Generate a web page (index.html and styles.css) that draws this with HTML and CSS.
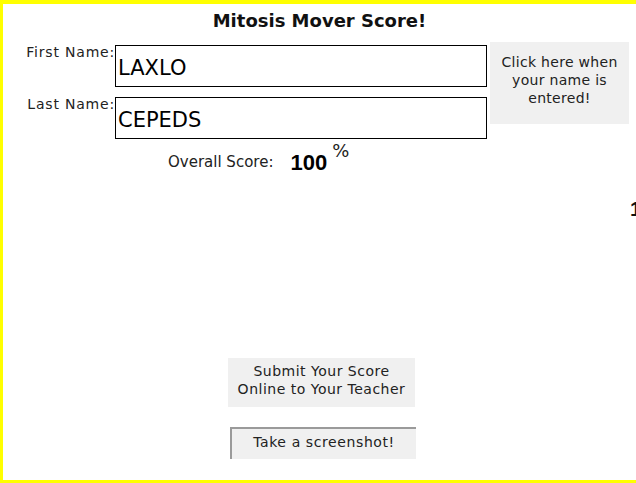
FILE: index.html
```html
<!DOCTYPE html>
<html>
<head>
<meta charset="utf-8">
<link rel="stylesheet" href="styles.css">
</head>
<body>
<div class="stage">
  <h1 class="title">Mitosis Mover Score!</h1>
  <div class="form">
    <div class="fields">
      <div class="field">
        <label class="label">First Name:</label>
        <div class="input">LAXLO</div>
      </div>
      <div class="field">
        <label class="label">Last Name:</label>
        <div class="input">CEPEDS</div>
      </div>
    </div>
    <div class="btn click">Click here when<br>your name is<br>entered!</div>
  </div>
  <div class="score">
    <span class="score-label">Overall Score:</span>
    <span class="score-value">100</span>
    <span class="pct">%</span>
  </div>
  <div class="actions">
    <div class="btn submit">Submit Your Score<br>Online to Your Teacher</div>
    <div class="btn shot">Take a screenshot!</div>
  </div>
  <div class="stray">1</div>
</div>
</body>
</html>
```
FILE: styles.css
```css
* { box-sizing: border-box; }
html, body { margin: 0; padding: 0; background: #fff; overflow: hidden; }
body { width: 636px; height: 483px; }
.stage {
  position: relative;
  width: 640px;
  height: 483px;
  border-top: 4px solid #ffff00;
  border-left: 3px solid #ffff00;
  border-bottom: 3px solid #ffff00;
  font-family: "DejaVu Sans", sans-serif;
  color: #1a1a1a;
  display: flex;
  flex-direction: column;
}
.title {
  margin: 5px 0 0 0;
  font-size: 18px;
  line-height: 24px;
  font-weight: bold;
  text-align: center;
  width: 633px;
  color: #111;
}
.form {
  display: flex;
  margin-top: 9px;
}
.fields {
  display: flex;
  flex-direction: column;
  gap: 10px;
  margin-top: 3px;
}
.field { display: flex; align-items: flex-start; }
.label {
  width: 112px;
  text-align: right;
  font-size: 14px;
  line-height: 15px;
  letter-spacing: 0.8px;
  padding-top: 0;
  padding-right: 0;
  color: #222;
}
.input {
  width: 372px;
  height: 42px;
  border: 1px solid #000;
  font-size: 21px;
  line-height: 24px;
  padding: 10px 0 0 2px;
  color: #000;
}
.btn {
  background: #f0f0f0;
  text-align: center;
  font-size: 14px;
  line-height: 18px;
  letter-spacing: 0.5px;
  color: #222;
}
.click {
  width: 139px;
  height: 82px;
  margin-left: 3px;
  padding-top: 11px;
  letter-spacing: 0.3px;
}
.score {
  display: flex;
  align-items: flex-start;
  margin-top: 9px;
  margin-left: 165px;
  height: 30px;
}
.score-label { font-size: 15px; line-height: 16px; margin-top: 6px; color: #222; }
.score-value {
  font-family: "Liberation Sans", Arial, sans-serif;
  font-weight: bold;
  font-size: 22px;
  line-height: 24px;
  margin-left: 17px;
  margin-top: 3px;
  color: #000;
}
.pct { font-size: 18px; line-height: 18px; margin-left: 5px; margin-top: -6px; color: #222; }
.actions {
  display: flex;
  flex-direction: column;
  margin-left: 225px;
  margin-top: 180px;
}
.submit {
  width: 187px;
  height: 49px;
  padding-top: 4px;
}
.shot {
  width: 186px;
  height: 32px;
  margin-top: 20px;
  margin-left: 2px;
  border-top: 2px solid #9a9a9a;
  border-left: 2px solid #9a9a9a;
  padding-top: 4px;
  font-size: 14px;
  letter-spacing: 0.6px;
}
.stray {
  position: absolute;
  left: 627px;
  top: 193px;
  font-family: "Liberation Sans", Arial, sans-serif;
  font-weight: bold;
  font-size: 21px;
  color: #111;
}
```
